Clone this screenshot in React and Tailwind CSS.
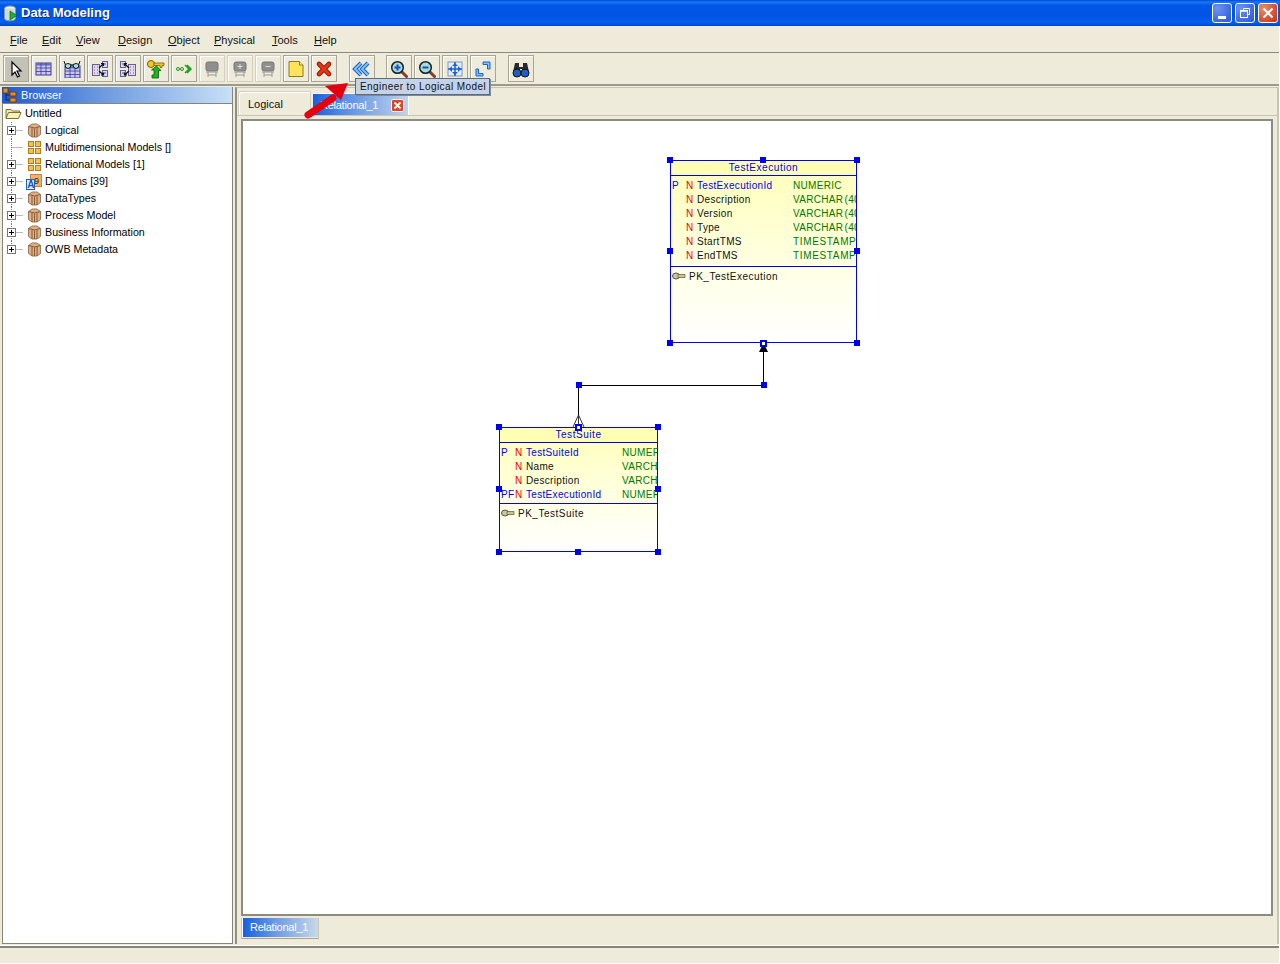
import React from "react";

const Tool = ({ children, active, disabled }) => (
  <div className={`w-[26px] h-[27px] flex items-center justify-center border ${disabled ? "border-[#d4d0c0]" : "border-[#a8a597]"} shadow-[inset_1px_1px_0_#ffffff] ${active ? "bg-[#c4c2b4]" : "bg-[#eeebdb]"}`}>
    {children}
  </div>
);

const Svg = ({ children, s = 18, w, h }) => (
  <svg width={w || s} height={h || s} viewBox={`0 0 ${w || s} ${h || s}`} className="block shrink-0">{children}</svg>
);

const Pointer = () => (
  <Svg><path d="M5 2 L5 15 L8 12 L10.5 17 L12.5 16 L10 11 L14 11 Z" fill="#fff" stroke="#000" strokeWidth="1.2" /></Svg>
);

const GridIcon = ({ x = 1, y = 3 }) => (
  <g>
    <rect x={x} y={y} width="15" height="12" fill="#c9c6f0" stroke="#3a3a9a" />
    <rect x={x} y={y} width="15" height="2.5" fill="#6a6ac8" />
    <path d={`M${x + 5} ${y}v12M${x + 10} ${y}v12M${x} ${y + 5}h15M${x} ${y + 8.5}h15`} stroke="#3a3a9a" strokeWidth="0.8" />
  </g>
);

const Glasses = () => (
  <Svg>
    <GridIcon x={2} y={6} />
    <path d="M2 4.500q3-2 6 0q0 4-3 4t-3-4zM10 4.500q3-2 6 0q0 4-3 4t-3-4z" fill="#a8e4ec" stroke="#111" />
    <path d="M8 5h2M2 4L1 1M16 4l1-3" stroke="#111" />
  </Svg>
);

const Split = ({ flip }) => (
  <Svg>
    <g transform={flip ? "matrix(-1 0 0 1 18 0)" : undefined}>
      <rect x="1.500" y="4.500" width="7" height="11" fill="#dcdcf4" stroke="#6060a0" />
      <rect x="11.500" y="1.500" width="5" height="6" fill="#dcdcf4" stroke="#6060a0" />
      <rect x="11.500" y="10.500" width="5" height="6" fill="#dcdcf4" stroke="#6060a0" />
      <path d="M3 7h1M6 7h1M3 10h1M6 10h1M3 13h1M6 13h1" stroke="#d04040" />
      <path d="M13 4h2M13 13h2" stroke="#3060c0" />
      <path d="M8 8l4-4M10 3.500h2.500V6M8 11l4 3.500M10 15h2.500v-2.500" fill="none" stroke="#111" strokeWidth="1.200" />
    </g>
  </Svg>
);

const KeyUp = () => (
  <Svg w={20} h={20}>
    <circle cx="5" cy="5" r="3.5" fill="#f4c820" stroke="#7a5a00" />
    <path d="M8 4h10v2.5h-2v2h-2v-2H8z" fill="#f4c820" stroke="#7a5a00" strokeWidth="0.8" />
    <path d="M6 19v-3h2v-5l-2.500 0L10.500 7l4.500 4.500h-2.500v7.500z" fill="#20b020" stroke="#0a5a0a" strokeWidth="0.8" />
  </Svg>
);

const DotsArrow = () => (
  <Svg>
    <circle cx="3" cy="9" r="1.500" fill="none" stroke="#209020" />
    <circle cx="7" cy="9" r="1.500" fill="none" stroke="#209020" />
    <path d="M10 5l4 4-4 4M12 5l4 4-4 4" fill="none" stroke="#20a020" strokeWidth="1.500" />
  </Svg>
);

const Chair = ({ mark }) => (
  <Svg>
    <rect x="3" y="2" width="12" height="9" rx="2" fill="#8f8f8f" stroke="#777" />
    <path d="M3 12h12M5 12v5M13 12v5M5 15h8" stroke="#999" fill="none" />
    {mark === "+" && <path d="M6.500 6.500h5M9 4v5" stroke="#ddd" />}
    {mark === "-" && <path d="M6.500 6.500h5" stroke="#ddd" />}
  </Svg>
);

const Note = () => (
  <Svg>
    <path d="M2 1.500h10.500L16 5v11.500H2z" fill="#ffe35a" stroke="#8a7a20" />
    <path d="M12.500 1.500V5H16" fill="#fff6b0" stroke="#8a7a20" />
  </Svg>
);

const RedX = () => (
  <Svg>
    <path d="M4 4l10 10M14 4L4 14" stroke="#7a1a00" strokeWidth="4.600" strokeLinecap="round" />
    <path d="M4 4l10 10M14 4L4 14" stroke="#f03010" strokeWidth="3" strokeLinecap="round" />
  </Svg>
);

const Chevrons = () => (
  <Svg w={20} h={18}>
    <path d="M9 3L3 9l6 6M16 3l-6 6 6 6" fill="none" stroke="#1a60d0" strokeWidth="4" strokeLinejoin="miter" />
    <path d="M9 3L3 9l6 6M16 3l-6 6 6 6" fill="none" stroke="#7cc0f4" strokeWidth="2" />
  </Svg>
);

const Zoom = ({ mark }) => (
  <Svg>
    <path d="M11 11l5.500 5.500" stroke="#8a3a2a" strokeWidth="3" strokeLinecap="round" />
    <circle cx="7.500" cy="7.500" r="5.800" fill="#a8dcd8" stroke="#123" strokeWidth="1.500" />
    <path d={mark === "+" ? "M4.500 7.500h6M7.500 4.500v6" : "M4.500 7.500h6"} stroke="#1a50c0" strokeWidth="2" />
  </Svg>
);

const Fit = () => (
  <Svg>
    <rect x="2" y="2" width="14" height="14" fill="#e4ecfa" stroke="#7a98c8" />
    <path d="M9 2v14M2 9h14" stroke="#1a60d0" strokeWidth="1.500" />
    <path d="M9 3l-3 3h6zM9 15l-3-3h6zM3 9l3-3v6zM15 9l-3-3v6z" fill="#1a60d0" />
  </Svg>
);

const Expand = () => (
  <Svg>
    <path d="M2 9v7h7v-2.500H4.500V9zM16 9V2H9v2.500h4.500V9z" fill="#7cc0f4" stroke="#1a60d0" />
  </Svg>
);

const Binoculars = () => (
  <Svg>
    <path d="M3 3h4v4h4V3h4l2 9H10V9H8v3H1z" fill="#2a2a2a" />
    <circle cx="5" cy="13" r="4" fill="#1a60c0" stroke="#111" />
    <circle cx="13" cy="13" r="4" fill="#1a60c0" stroke="#111" />
  </Svg>
);

const Cube = () => (
  <Svg w={15} h={15}>
    <path d="M1.500 3.500L5 1h5l3.500 2.500v8L10 14H5l-3.500-2.500z" fill="#dcb088" stroke="#9a7a58" />
    <path d="M1.500 3.500Q7.500 6.500 13.500 3.500" fill="none" stroke="#8a5a30" />
    <path d="M5 5v9M7.500 5.500V14M10 5v9" stroke="#8a5a30" />
  </Svg>
);

const Quad = () => (
  <Svg w={13} h={13}>
    {[[0.5, 0.5], [7.5, 0.5], [0.5, 7.5], [7.5, 7.5]].map(([x, y]) => (
      <rect key={`${x}${y}`} x={x} y={y} width="5" height="5" fill="#f4c050" stroke="#b87a20" />
    ))}
  </Svg>
);

const DomainIcon = () => (
  <Svg w={16} h={16}>
    <rect x="4.500" y="0.500" width="11" height="12" fill="#f4b060" stroke="#c88040" />
    <text x="8" y="9.500" fontSize="9" fontFamily="Liberation Sans" fill="#402000">9</text>
    <rect x="0.500" y="5.500" width="8" height="10" fill="#e8f0ff" stroke="#2060c0" />
    <text x="1.200" y="14" fontSize="10" fontWeight="700" fontFamily="Liberation Sans" fill="#1a50c0">A</text>
  </Svg>
);

const Connector = ({ plus, last }) => (
  <svg width="23" height="17" viewBox="0 0 23 17" className="block shrink-0">
    <path d={`M8.500 0V${last ? 8 : 17}`} stroke="#777" strokeDasharray="1 1" />
    <path d="M8.500 8.500H20" stroke="#777" strokeDasharray="1 1" />
    {plus && (
      <g>
        <rect x="4.500" y="4.500" width="8" height="8" fill="#fff" stroke="#777" />
        <path d="M6 8.500h5M8.500 6v5" stroke="#000" />
      </g>
    )}
  </svg>
);

const treeRows = [
  ["Logical", <Cube />, true],
  ["Multidimensional Models []", <Quad />, false],
  ["Relational Models [1]", <Quad />, true],
  ["Domains [39]", <DomainIcon />, true],
  ["DataTypes", <Cube />, true],
  ["Process Model", <Cube />, true],
  ["Business Information", <Cube />, true],
  ["OWB Metadata", <Cube />, true, true],
];

const Handle = ({ className }) => (
  <div className={`absolute w-[6px] h-[6px] bg-[#0000f0] ${className}`} />
);

const ColKey = () => (
  <svg width="14" height="8" viewBox="0 0 14 8" className="block shrink-0">
    <ellipse cx="4" cy="4" rx="3.500" ry="3" fill="#c8c890" stroke="#555" />
    <path d="M6 2.500h7v3H6z" fill="#c8c880" stroke="#555" strokeWidth="0.700" />
  </svg>
);

const cell = "overflow-hidden whitespace-nowrap";

const ErTable = ({ name, rows, pk, className, bodyH, pkH, colA, colB, colC }) => (
  <div className={`absolute border border-[#0000f0] bg-[linear-gradient(180deg,#ffffb8_0%,#fffff0_75%,#ffffff_100%)] text-[10px] ${className}`}>
    <div className="h-[15px] border-b border-[#0000f0] text-center text-[#0000f0] leading-[14px] bg-[#ffffb4] tracking-[0.55px]">{name}</div>
    <div className={`border-b border-[#0000f0] pt-[3px] tracking-[0.32px] ${bodyH}`}>
      {rows.map(([key, label, type, blue]) => (
        <div key={label} className="flex h-[14px] items-center leading-[14px]">
          <div className={`${colA} pl-[1px] text-[#0000f0] ${cell}`}>{key}</div>
          <div className={`${colB} text-[#f00000] ${cell}`}>N</div>
          <div className={`${colC} ${blue ? "text-[#0000f0]" : "text-[#111]"} ${cell}`}>{label}</div>
          <div className={`flex-1 min-w-0 text-[#007800] [word-spacing:-2px] ${type === "TIMESTAMP" ? "tracking-[0.65px]" : ""} ${cell}`}>{type}</div>
        </div>
      ))}
    </div>
    <div className={`flex items-center gap-[3px] pl-[1px] ${pkH} text-[#111] tracking-[0.5px]`}>
      <ColKey />
      <span>{pk}</span>
    </div>
  </div>
);

export default function App() {
  return (
    <div className="relative w-[1280px] h-[964px] bg-white overflow-hidden font-['Liberation_Sans',sans-serif] text-[11px] text-black">
      {/* title bar */}
      <div className="h-[26px] w-[1280px] flex items-center pl-[3px] pr-[2px] bg-[linear-gradient(180deg,#0049d8_0%,#1a78f4_8%,#0058e8_20%,#0054e3_60%,#0060f0_85%,#0048c8_100%)]">
        <svg width="16" height="17" viewBox="0 0 16 17" className="block shrink-0">
          <ellipse cx="7" cy="3.500" rx="5.500" ry="2.500" fill="#e8f0e8" stroke="#8a9a9a" />
          <path d="M1.500 3.500v10c0 3 11 3 11 0v-10" fill="#d0dcd8" stroke="#8a9a9a" />
          <path d="M7 6l7 4.500L7 15z" fill="#20b030" stroke="#0a6a1a" strokeWidth="0.700" />
        </svg>
        <span className="ml-[2px] text-[13px] font-bold text-white [text-shadow:1px_1px_0_#0a2a8a]">Data Modeling</span>
        <div className="ml-auto flex gap-[3px]">
          <div className="w-[20px] h-[20px] rounded-[3px] border border-white bg-[radial-gradient(circle_at_25%_25%,#6d92f0,#2a55d8)] flex items-end pl-[5px] pb-[3px]">
            <div className="w-[8px] h-[3px] bg-white" />
          </div>
          <div className="w-[20px] h-[20px] rounded-[3px] border border-white bg-[radial-gradient(circle_at_25%_25%,#6d92f0,#2a55d8)] flex items-center justify-center">
            <svg width="12" height="12" viewBox="0 0 12 12" className="block">
              <path d="M4.500 3V1.500h6v6H8.500" fill="none" stroke="#fff" />
              <rect x="1.500" y="3.500" width="7" height="7" fill="none" stroke="#fff" />
              <path d="M1 4h8" stroke="#fff" strokeWidth="1.500" />
            </svg>
          </div>
          <div className="w-[20px] h-[20px] rounded-[3px] border border-white bg-[radial-gradient(circle_at_25%_25%,#e88a6c,#c83010)] flex items-center justify-center">
            <svg width="12" height="12" viewBox="0 0 12 12" className="block">
              <path d="M1.500 1.500l9 9M10.500 1.500l-9 9" stroke="#fff" strokeWidth="2" />
            </svg>
          </div>
        </div>
      </div>

      {/* menu */}
      <div className="h-[27px] w-[1279px] bg-[#eeebdb] border-b border-[#8a8a80] flex items-center pl-[10px] pt-[2px] text-[11px] text-[#111]">
        {[["F", "ile", 32], ["E", "dit", 34], ["V", "iew", 42], ["D", "esign", 50], ["O", "bject", 46], ["P", "hysical", 58], ["T", "ools", 42], ["H", "elp", 30]].map(([u, r, w]) => (
          <span key={u} style={{ width: w }} className="block shrink-0">
            <span className="underline">{u}</span>{r}
          </span>
        ))}
      </div>

      {/* toolbar */}
      <div className="h-[33px] w-[1279px] bg-[#eeebdb] border-b-2 border-[#9c9a8c] flex items-start pl-[3px] gap-[2px] pt-[2px]">
        <Tool active><Pointer /></Tool>
        <Tool><Svg><GridIcon /></Svg></Tool>
        <Tool><Glasses /></Tool>
        <Tool><Split /></Tool>
        <Tool><Split flip /></Tool>
        <Tool><KeyUp /></Tool>
        <Tool><DotsArrow /></Tool>
        <Tool disabled><Chair /></Tool>
        <Tool disabled><Chair mark="+" /></Tool>
        <Tool disabled><Chair mark="-" /></Tool>
        <Tool><Note /></Tool>
        <Tool><RedX /></Tool>
        <div className="w-[8px]" />
        <Tool><Chevrons /></Tool>
        <div className="w-[7px]" />
        <Tool><Zoom mark="+" /></Tool>
        <Tool><Zoom mark="-" /></Tool>
        <Tool><Fit /></Tool>
        <Tool><Expand /></Tool>
        <div className="w-[8px]" />
        <Tool><Binoculars /></Tool>
      </div>

      {/* main */}
      <div className="h-[860px] w-[1279px] bg-[#eeebdb] flex pt-[1px] pl-[2px] border-b border-white">
        {/* browser */}
        <div className="w-[231px] h-[857px] border border-t-0 border-[#86857a] bg-white shrink-0">
          <div className="h-[17px] flex items-center border-b border-[#86857a] bg-[linear-gradient(90deg,#1c5ad8_0%,#6f9ce0_45%,#c8e0f8_100%)] text-white -ml-[1px]">
            <svg width="16" height="16" viewBox="0 0 16 16" className="block shrink-0">
              <path d="M4 5v8h5M4 8h5" stroke="#223" fill="none" />
              <rect x="1" y="1" width="5" height="5" fill="#e09030" stroke="#704010" />
              <rect x="8" y="5" width="6" height="4" fill="#e09030" stroke="#704010" />
              <rect x="8" y="11" width="6" height="4" fill="#e09030" stroke="#704010" />
            </svg>
            <span className="ml-[3px] tracking-[0.1px]">Browser</span>
          </div>
          <div className="h-[18px] flex items-center pl-[2px] tracking-[-0.1px]">
            <svg width="17" height="13" viewBox="0 0 17 13" className="block shrink-0">
              <path d="M1 11V2.500h5l1.500 1.500h7v2" fill="#f4e8a0" stroke="#7a7030" />
              <path d="M1 11.500L3.500 5.500H16l-2.500 6z" fill="#f8f0b8" stroke="#7a7030" />
            </svg>
            <span className="ml-[3px]">Untitled</span>
          </div>
          <div className="text-[10.700px]">
            {treeRows.map(([label, icon, plus, last]) => (
              <div key={label} className="h-[17px] flex items-center whitespace-nowrap">
                <Connector plus={plus} last={last} />
                <div className="w-[16px] flex justify-center mr-[3px]">{icon}</div>
                <span>{label}</span>
              </div>
            ))}
          </div>
        </div>

        {/* splitter */}
        <div className="w-[2px] shrink-0" />

        {/* editor */}
        <div className="flex-1 min-w-0 border-t border-l-2 border-r-2 border-[#c8c5b5] border-l-[#8f8e83] h-[857px] pt-[3px]">
          <div className="flex h-[24px] items-end pl-[1px] gap-[2px]">
            <div className="w-[73px] h-[24px] border border-b-0 border-[#d4d0c4] shadow-[inset_1px_1px_0_#fff] flex items-center pl-[9px] pt-[2px] text-[#111] rounded-tl-[3px]">Logical</div>
            <div className="w-[96px] h-[22px] border-t border-r border-white bg-[linear-gradient(90deg,#1660e0_0%,#5c90e4_35%,#c0d4ec_100%)] text-white flex items-center pl-[7px] pt-[1px] justify-between pr-[4px] tracking-[-0.25px]">
              <span>Relational_1</span>
              <div className="w-[13px] h-[13px] rounded-[2px] bg-[#d84828] border border-[#fbeee8] flex items-center justify-center">
                <svg width="9" height="9" viewBox="0 0 9 9" className="block"><path d="M1.500 1.500l6 6M7.500 1.500l-6 6" stroke="#fff" strokeWidth="1.800" /></svg>
              </div>
            </div>
          </div>
          <div className="border-t border-[#c8c5b5] pt-[3px] pl-[4px] pr-[3px]">
            {/* canvas */}
            <div className="relative h-[797px] w-[1032px] bg-white border-2 border-[#8c8b80]">
              <svg width="1030" height="790" viewBox="0 0 1030 790" className="absolute left-0 top-0 block">
                <path d="M520.500 222V264.500H335.500V306" fill="none" stroke="#000" />
                <path d="M520.500 222l-4.500 9h9z" fill="#000" />
                <path d="M335.500 294L330 306M335.500 294L341 306M335.500 294V306" fill="none" stroke="#333" />
              </svg>
              <ErTable
                name="TestExecution"
                className="left-[427px] top-[39px] w-[187px] h-[183px]"
                bodyH="h-[91px]"
                pkH="h-[18px]"
                colA="w-[15px]"
                colB="w-[11px]"
                colC="w-[96px]"
                rows={[
                  ["P", "TestExecutionId", "NUMERIC", true],
                  ["", "Description", "VARCHAR (40"],
                  ["", "Version", "VARCHAR (40"],
                  ["", "Type", "VARCHAR (40"],
                  ["", "StartTMS", "TIMESTAMP"],
                  ["", "EndTMS", "TIMESTAMP"],
                ]}
                pk="PK_TestExecution"
              />
              <ErTable
                name="TestSuite"
                className="left-[256px] top-[306px] w-[159px] h-[125px]"
                bodyH="h-[61px]"
                pkH="h-[18px]"
                colA="w-[15px]"
                colB="w-[11px]"
                colC="w-[96px]"
                rows={[
                  ["P", "TestSuiteId", "NUMERIC", true],
                  ["", "Name", "VARCHAR"],
                  ["", "Description", "VARCHAR"],
                  ["PF", "TestExecutionId", "NUMERIC", true],
                ]}
                pk="PK_TestSuite"
              />
              {/* TestExecution handles */}
              <Handle className="left-[424px] top-[36px]" />
              <Handle className="left-[517px] top-[36px]" />
              <Handle className="left-[611px] top-[36px]" />
              <Handle className="left-[424px] top-[127px]" />
              <Handle className="left-[611px] top-[127px]" />
              <Handle className="left-[424px] top-[219px]" />
              <Handle className="left-[611px] top-[219px]" />
              <div className="absolute left-[517px] top-[219px] w-[7px] h-[7px] border-2 border-[#0000f0] bg-white" />
              {/* TestSuite handles */}
              <Handle className="left-[253px] top-[303px]" />
              <Handle className="left-[412px] top-[303px]" />
              <Handle className="left-[253px] top-[365px]" />
              <Handle className="left-[412px] top-[365px]" />
              <Handle className="left-[253px] top-[428px]" />
              <Handle className="left-[332px] top-[428px]" />
              <Handle className="left-[412px] top-[428px]" />
              <div className="absolute left-[332px] top-[303px] w-[7px] h-[7px] border-2 border-[#0000f0] bg-white" />
              {/* relationship handles */}
              <Handle className="left-[333px] top-[261px]" />
              <Handle className="left-[518px] top-[261px]" />
            </div>
            {/* bottom tabs */}
            <div className="mt-[2px] h-[21px] w-[78px] border border-t-0 border-[#c8c5b5] shadow-[inset_1px_0_0_#fff] border-b-[#a8a597] pl-[1px] pb-[1px]">
              <div className="h-[19px] bg-[linear-gradient(90deg,#1660e0_0%,#6f9ce4_45%,#c8d8e8_100%)] text-white flex items-center pl-[7px] tracking-[-0.25px]">Relational_1</div>
            </div>
          </div>
        </div>
      </div>

      {/* status bar */}
      <div className="h-[17px] w-[1279px] bg-[#eeebdb] border-t-2 border-[#86857a]" />

      {/* tooltip */}
      <div className="absolute left-[355px] top-[78px] w-[135px] h-[17px] bg-[#c4d3e8] border border-[#5a6a80] shadow-[1px_1px_0_#7a8a9a] flex items-center pl-[4px] text-[10px] tracking-[0.42px] text-[#111] whitespace-nowrap">
        Engineer to Logical Model
      </div>

      {/* red arrow annotation */}
      <svg width="70" height="50" viewBox="0 0 70 50" className="absolute left-[295px] top-[78px] block">
        <path d="M13 37L38 20" stroke="#e40010" strokeWidth="7" strokeLinecap="round" />
        <path d="M53 5L30 8L46 22Z" fill="#e40010" />
      </svg>
    </div>
  );
}
